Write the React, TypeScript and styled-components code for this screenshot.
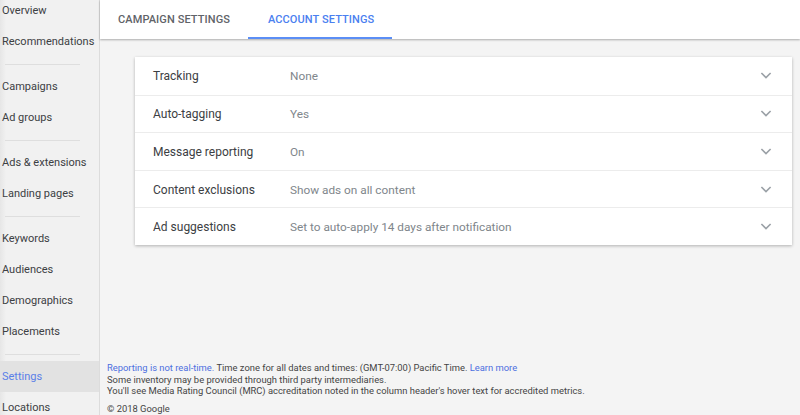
import styled, { createGlobalStyle } from 'styled-components'

const GlobalStyle = createGlobalStyle`
  html, body {
    margin: 0;
    padding: 0;
    background: #f4f4f4;
    font-family: Roboto, 'Liberation Sans', Arial, sans-serif;
  }
  * { box-sizing: border-box; }
`

const Page = styled.div`
  display: flex;
  width: 800px;
  height: 415px;
  overflow: hidden;
`

const Sidebar = styled.nav`
  width: 100px;
  flex-shrink: 0;
  display: flex;
  flex-direction: column;
  margin-top: -5px;
  background: linear-gradient(to right, #e6e6e6 0px, #f1f1f1 6px, #f1f1f1 100%);
  border-right: 1px solid #dcdcdc;
`

const NavItem = styled.div<{ $active?: boolean }>`
  height: 31px;
  flex-shrink: 0;
  display: flex;
  align-items: center;
  padding-left: 2px;
  font-size: 11px;
  color: ${(p) => (p.$active ? '#5a7fe8' : '#3c4043')};
  background: ${(p) => (p.$active ? '#e2e2e2' : 'transparent')};
  white-space: nowrap;
`

const Divider = styled.div`
  height: 14px;
  flex-shrink: 0;
  display: flex;
  align-items: center;
  padding: 0 19px 0 5px;
  &::after {
    content: '';
    flex: 1;
    height: 1px;
    background: #dedede;
  }
`

const Main = styled.main`
  flex: 1;
  display: flex;
  flex-direction: column;
  background: #f4f4f4;
`

const Header = styled.div`
  height: 39px;
  flex-shrink: 0;
  display: flex;
  background: #fff;
  box-shadow: 0 1px 2px rgba(0, 0, 0, 0.3);
  position: relative;
  z-index: 1;
`

const Tab = styled.div<{ $active?: boolean }>`
  display: flex;
  align-items: center;
  padding: 1px 18px 0 ${(p) => (p.$active ? '20px' : '18px')};
  font-size: 11px;
  font-weight: 500;
  letter-spacing: 0.1px;
  text-transform: uppercase;
  color: ${(p) => (p.$active ? '#4a80f0' : '#5f6368')};
  border-bottom: 2px solid ${(p) => (p.$active ? '#5b8ef5' : 'transparent')};
`

const Content = styled.div`
  padding: 18px 8px 0 35px;
`

const Card = styled.div`
  background: #fff;
  box-shadow: 0 1px 3px rgba(0, 0, 0, 0.28);
`

const Row = styled.div`
  height: 37.6px;
  display: flex;
  align-items: center;
  padding: 1px 20px 0 18px;
  font-size: 12px;
  & + & {
    border-top: 1px solid #ececec;
  }
`

const Label = styled.div`
  width: 137px;
  color: #3c4043;
`

const Value = styled.div`
  flex: 1;
  font-size: 11.8px;
  color: #80868b;
`

const Chevron = styled.svg`
  width: 12px;
  height: 8px;
  color: #9aa0a6;
`

const Footer = styled.footer`
  margin-top: auto;
  padding: 0 0 0 7px;
  font-size: 9.4px;
  line-height: 11.6px;
  color: #444;
`

const Link = styled.span`
  color: #4d6fe0;
`

const Copyright = styled.div`
  margin-top: 5px;
  line-height: 13px;
`

const navGroups = [
  ['Overview', 'Recommendations'],
  ['Campaigns', 'Ad groups'],
  ['Ads & extensions', 'Landing pages'],
  ['Keywords', 'Audiences', 'Demographics', 'Placements'],
  ['Settings', 'Locations'],
]

const settings = [
  ['Tracking', 'None'],
  ['Auto-tagging', 'Yes'],
  ['Message reporting', 'On'],
  ['Content exclusions', 'Show ads on all content'],
  ['Ad suggestions', 'Set to auto-apply 14 days after notification'],
]

export default function App() {
  return (
    <>
      <GlobalStyle />
      <Page>
        <Sidebar>
          {navGroups.map((group, i) => (
            <div key={i} style={{ display: 'contents' }}>
              {i > 0 && <Divider />}
              {group.map((item) => (
                <NavItem key={item} $active={item === 'Settings'}>
                  {item}
                </NavItem>
              ))}
            </div>
          ))}
        </Sidebar>
        <Main>
          <Header>
            <Tab>Campaign settings</Tab>
            <Tab $active>Account settings</Tab>
          </Header>
          <Content>
            <Card>
              {settings.map(([label, value]) => (
                <Row key={label}>
                  <Label>{label}</Label>
                  <Value>{value}</Value>
                  <Chevron viewBox="0 0 12 8">
                    <path d="M1.4 1 6 5.6 10.6 1" fill="none" stroke="currentColor" strokeWidth="1.6" />
                  </Chevron>
                </Row>
              ))}
            </Card>
          </Content>
          <Footer>
            <div>
              <Link>Reporting is not real-time.</Link> Time zone for all dates and times: (GMT-07:00) Pacific Time.{' '}
              <Link>Learn more</Link>
            </div>
            <div>Some inventory may be provided through third party intermediaries.</div>
            <div>
              You'll see Media Rating Council (MRC) accreditation noted in the column header's hover text for
              accredited metrics.
            </div>
            <Copyright>© 2018 Google</Copyright>
          </Footer>
        </Main>
      </Page>
    </>
  )
}
